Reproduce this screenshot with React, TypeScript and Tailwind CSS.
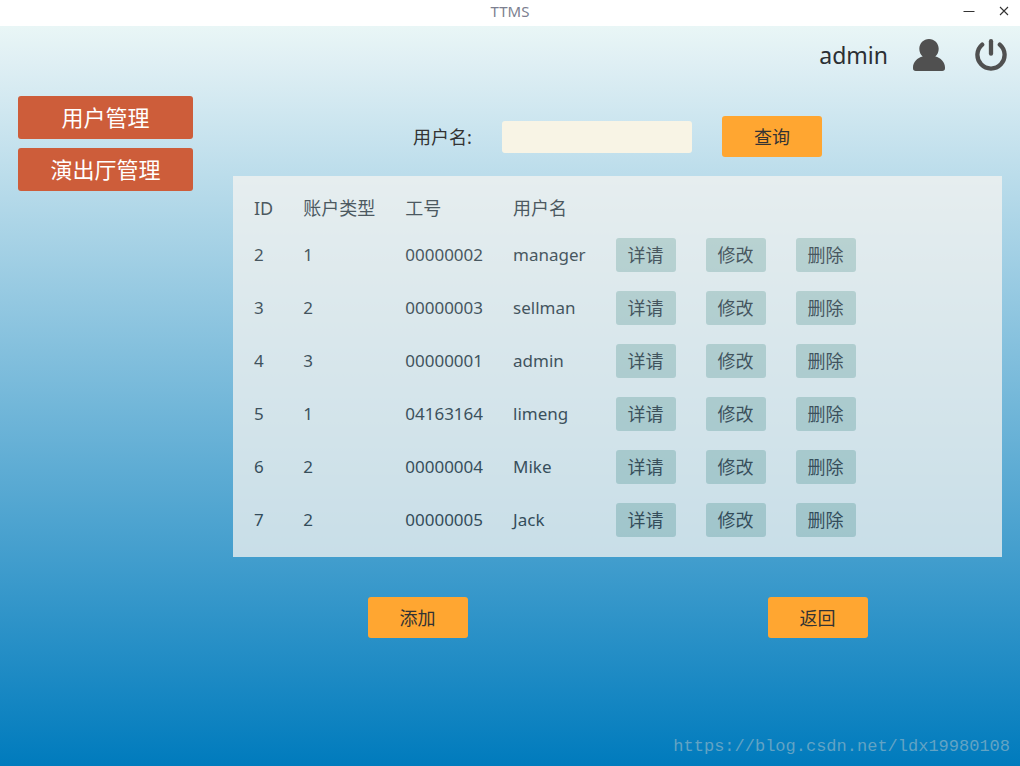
type User = {
  id: number;
  type: number;
  workNo: string;
  name: string;
};

const users: User[] = [
  { id: 2, type: 1, workNo: "00000002", name: "manager" },
  { id: 3, type: 2, workNo: "00000003", name: "sellman" },
  { id: 4, type: 3, workNo: "00000001", name: "admin" },
  { id: 5, type: 1, workNo: "04163164", name: "limeng" },
  { id: 6, type: 2, workNo: "00000004", name: "Mike" },
  { id: 7, type: 2, workNo: "00000005", name: "Jack" },
];

const menuItems = ["用户管理", "演出厅管理"];
const rowActions = ["详请", "修改", "删除"];

const TitleBar = () => (
  <div className="grid h-[26px] grid-cols-[1fr_auto_1fr] items-center bg-white px-[10px] pb-1">
    <span />
    <h1 className="text-[15px] leading-5 text-[#7c7f90]">TTMS</h1>
    <div className="flex justify-end gap-[23px] text-[#333]">
      <button type="button" aria-label="Minimize">
        <svg width="12" height="12" viewBox="0 0 12 12" stroke="currentColor">
          <path d="M0.5 6.5h11" />
        </svg>
      </button>
      <button type="button" aria-label="Close">
        <svg width="12" height="12" viewBox="0 0 12 12" stroke="currentColor" strokeWidth="1.1">
          <path d="M2 2l8 8M10 2l-8 8" />
        </svg>
      </button>
    </div>
  </div>
);

const UserIcon = () => (
  <svg width="32" height="32" viewBox="0 0 32 32" fill="currentColor">
    <path d="M16 0c-5.4 0-9.7 4.300-9.700 9.700 0 3.200 1.300 5.900 3.400 7.800C4.400 18.700 0 23 0 28.500v.7C0 31 1 32 2.800 32h26.400c1.800 0 2.800-1 2.800-2.800v-.7c0-5.500-4.400-9.800-9.700-11 2.100-1.900 3.400-4.600 3.400-7.800C25.700 4.300 21.400 0 16 0z" />
  </svg>
);

const PowerIcon = () => (
  <svg
    width="32"
    height="32"
    viewBox="0 0 32 32"
    fill="none"
    stroke="currentColor"
    strokeWidth="4.3"
    strokeLinecap="round"
  >
    <path d="M16 2.200v12.500" />
    <path d="M7.200 5.600a13.600 13.600 0 1 0 17.600 0" />
  </svg>
);

const Header = () => (
  <header className="flex h-[58px] items-center justify-end pr-[13px] text-[#505050]">
    <span className="mr-[25px] text-[23px] text-[#2b2f33]">admin</span>
    <button type="button" aria-label="Account" className="mr-[30px]">
      <UserIcon />
    </button>
    <button type="button" aria-label="Log out">
      <PowerIcon />
    </button>
  </header>
);

const PrimaryButton = ({ label }: { label: string }) => (
  <button
    type="button"
    className="h-[41px] w-[100px] rounded-[3px] bg-[#ffa631] text-lg text-[#333]"
  >
    {label}
  </button>
);

const UserTable = () => (
  <div className="bg-[#f5f4f1] pt-3 pr-5 pb-[11px] pl-[21px] opacity-75">
    <table className="text-left text-[#2b2f33]">
      <thead>
        <tr className="h-10 text-lg">
          <th className="pr-[30px] font-normal">ID</th>
          <th className="pr-[30px] font-normal">账户类型</th>
          <th className="pr-[30px] font-normal">工号</th>
          <th className="pr-[30px] font-normal">用户名</th>
          <td />
        </tr>
      </thead>
      <tbody>
        {users.map((user) => (
          <tr key={user.id} className="h-[53px] text-[17px]">
            <td>{user.id}</td>
            <td>{user.type}</td>
            <td className="pr-[30px]">{user.workNo}</td>
            <td className="pr-[30px]">{user.name}</td>
            <td>
              <div className="flex gap-[30px]">
                {rowActions.map((action) => (
                  <button
                    key={action}
                    type="button"
                    className="h-[34px] w-[60px] rounded-[3px] bg-[#bed2cb] text-lg"
                  >
                    {action}
                  </button>
                ))}
              </div>
            </td>
          </tr>
        ))}
      </tbody>
    </table>
  </div>
);

export default function App() {
  return (
    <div className="flex min-h-screen flex-col font-['Noto_Sans','Noto_Sans_CJK_SC',sans-serif]">
      <TitleBar />

      <div className="flex flex-1 flex-col bg-[linear-gradient(to_bottom,#e9f6f6_0%,#dfeff4_5%,#b0d7e8_25%,#007bbd_100%)]">
        <Header />

        <div className="flex gap-10 px-[18px] pt-3">
          <nav className="flex w-[175px] shrink-0 flex-col gap-[9px]">
            {menuItems.map((item) => (
              <button
                key={item}
                type="button"
                className="h-[43px] rounded-[3px] bg-[#cd5d3a] text-[22px] text-white"
              >
                {item}
              </button>
            ))}
          </nav>

          <main className="flex-1 pt-5">
            <form className="flex items-center justify-center gap-[30px]">
              <label htmlFor="username" className="text-lg text-[#333]">
                用户名:
              </label>
              <input
                id="username"
                type="text"
                className="h-8 w-[190px] rounded-[3px] bg-[#f8f4e5] px-2 text-lg outline-none"
              />
              <PrimaryButton label="查询" />
            </form>

            <div className="mt-[19px]">
              <UserTable />
            </div>

            <div className="mt-10 flex justify-center gap-[300px]">
              <PrimaryButton label="添加" />
              <PrimaryButton label="返回" />
            </div>
          </main>
        </div>

        <footer className="mt-auto pr-[10px] pb-[7px] text-right font-['Liberation_Mono',monospace] text-[17px] leading-6 text-[#62a3c4]">
          <a href="https://blog.csdn.net/ldx19980108">https://blog.csdn.net/ldx19980108</a>
        </footer>
      </div>
    </div>
  );
}
